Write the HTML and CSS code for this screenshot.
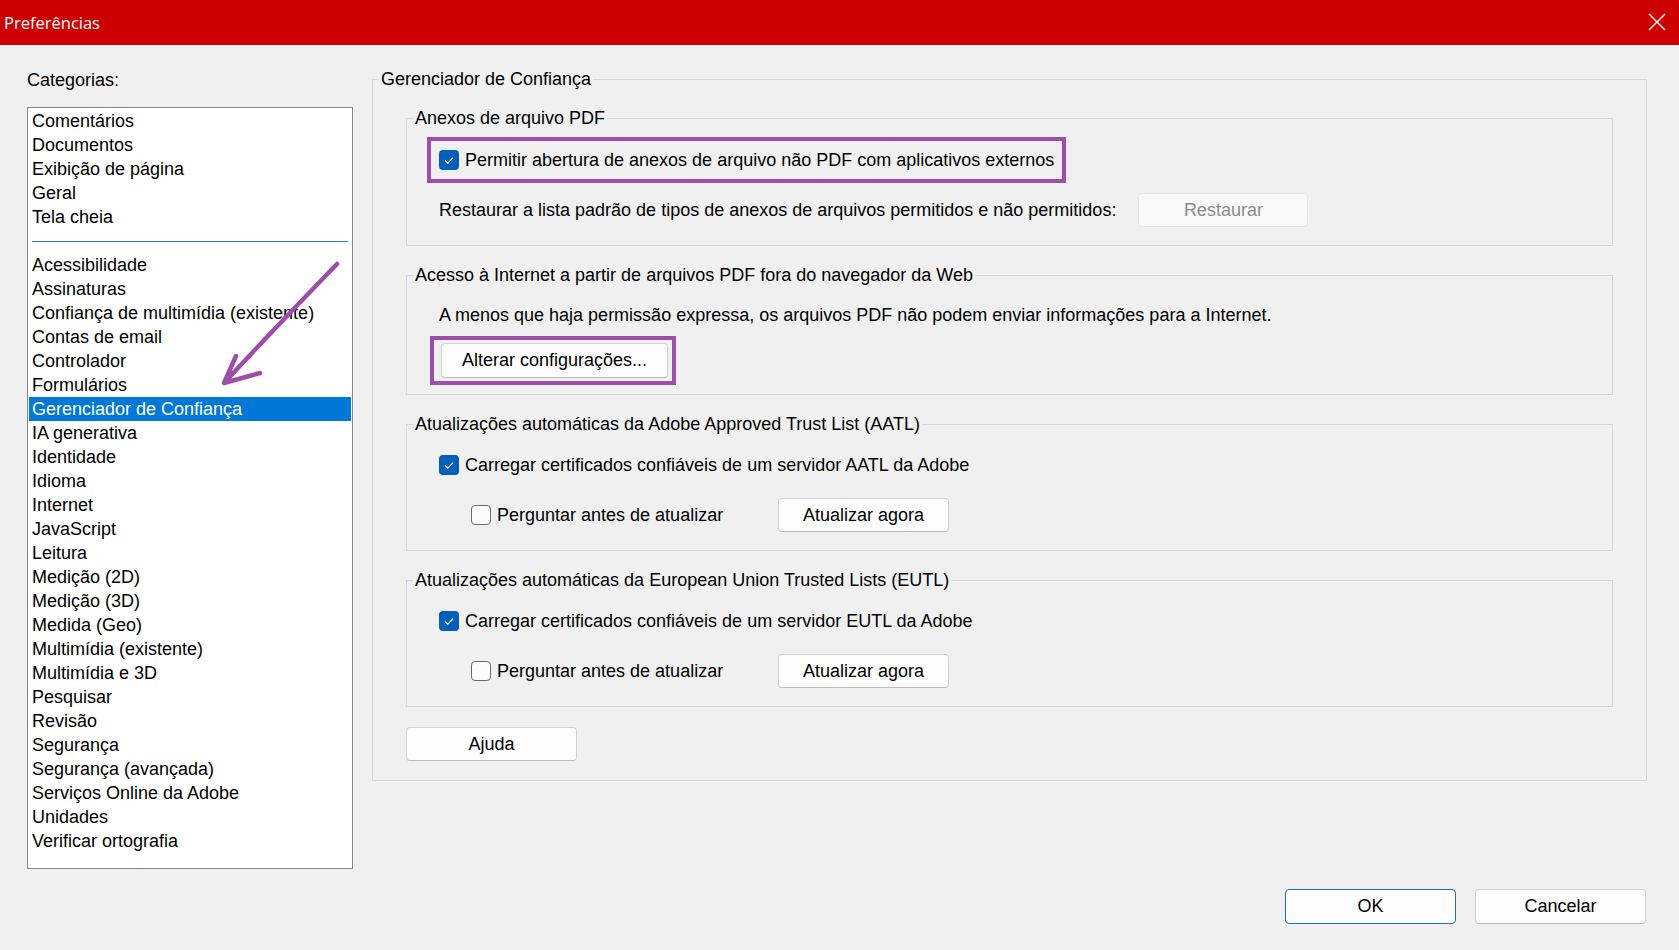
FILE: index.html
```html
<!DOCTYPE html>
<html lang="pt">
<head>
	<meta charset="UTF-8">
	<title>Preferências</title>
	<link rel="stylesheet" href="styles.css">
</head>
<body>
	<!-- Title bar -->
	<div class="titlebar">
		<span class="title">Preferências</span>
		<svg class="close" width="18" height="18" viewBox="0 0 18 18">
			<path d="M1 1 L17 17 M17 1 L1 17" stroke="#fff" stroke-width="1.4" fill="none"/>
		</svg>
	</div>

	<div class="main">
		<!-- Categories -->
		<div class="side">
			<div class="side-label">Categorias:</div>
			<ul class="categories">
				<li>Comentários</li>
				<li>Documentos</li>
				<li>Exibição de página</li>
				<li>Geral</li>
				<li>Tela cheia</li>
				<li class="sep"></li>
				<li>Acessibilidade</li>
				<li>Assinaturas</li>
				<li>Confiança de multimídia (existente)</li>
				<li>Contas de email</li>
				<li>Controlador</li>
				<li>Formulários</li>
				<li class="selected">Gerenciador de Confiança</li>
				<li>IA generativa</li>
				<li>Identidade</li>
				<li>Idioma</li>
				<li>Internet</li>
				<li>JavaScript</li>
				<li>Leitura</li>
				<li>Medição (2D)</li>
				<li>Medição (3D)</li>
				<li>Medida (Geo)</li>
				<li>Multimídia (existente)</li>
				<li>Multimídia e 3D</li>
				<li>Pesquisar</li>
				<li>Revisão</li>
				<li>Segurança</li>
				<li>Segurança (avançada)</li>
				<li>Serviços Online da Adobe</li>
				<li>Unidades</li>
				<li>Verificar ortografia</li>
			</ul>
		</div>

		<!-- Trust manager -->
		<fieldset class="trust">
			<legend>Gerenciador de Confiança</legend>

			<fieldset class="group g-attach">
				<legend>Anexos de arquivo PDF</legend>
				<div class="mark mark-check">
					<span class="check on"><svg width="20" height="20" viewBox="0 0 20 20"><path d="M6 10.4 L8.8 13.1 L14 7.6" stroke="#fff" stroke-width="1.3" fill="none"/></svg></span>
					<span>Permitir abertura de anexos de arquivo não PDF com aplicativos externos</span>
				</div>
				<div class="row restore">
					<span>Restaurar a lista padrão de tipos de anexos de arquivos permitidos e não permitidos:</span>
					<button class="btn disabled">Restaurar</button>
				</div>
			</fieldset>

			<fieldset class="group g-net">
				<legend>Acesso à Internet a partir de arquivos PDF fora do navegador da Web</legend>
				<div class="line">A menos que haja permissão expressa, os arquivos PDF não podem enviar informações para a Internet.</div>
				<div class="mark mark-btn">
					<button class="btn wide">Alterar configurações...</button>
				</div>
			</fieldset>

			<fieldset class="group g-update">
				<legend>Atualizações automáticas da Adobe Approved Trust List (AATL)</legend>
				<div class="line opt">
					<span class="check on"><svg width="20" height="20" viewBox="0 0 20 20"><path d="M6 10.4 L8.8 13.1 L14 7.6" stroke="#fff" stroke-width="1.3" fill="none"/></svg></span>
					<span>Carregar certificados confiáveis de um servidor AATL da Adobe</span>
				</div>
				<div class="row ask">
					<span class="ask-label"><span class="check"></span><span>Perguntar antes de atualizar</span></span>
					<button class="btn">Atualizar agora</button>
				</div>
			</fieldset>

			<fieldset class="group g-update g-last">
				<legend>Atualizações automáticas da European Union Trusted Lists (EUTL)</legend>
				<div class="line opt">
					<span class="check on"><svg width="20" height="20" viewBox="0 0 20 20"><path d="M6 10.4 L8.8 13.1 L14 7.6" stroke="#fff" stroke-width="1.3" fill="none"/></svg></span>
					<span>Carregar certificados confiáveis de um servidor EUTL da Adobe</span>
				</div>
				<div class="row ask">
					<span class="ask-label"><span class="check"></span><span>Perguntar antes de atualizar</span></span>
					<button class="btn">Atualizar agora</button>
				</div>
			</fieldset>

			<button class="btn">Ajuda</button>
		</fieldset>
	</div>

	<!-- Dialog buttons -->
	<div class="footer">
		<button class="btn tall default">OK</button>
		<button class="btn tall">Cancelar</button>
	</div>

	<!-- annotation arrow -->
	<svg class="arrow" width="1679" height="950" viewBox="0 0 1679 950">
		<path d="M337 264 C 300 302, 262 342, 224 383 M224 383 L236 356 M224 383 L260 373" stroke="#9b4fa8" stroke-width="4.5" stroke-linecap="round" fill="none"/>
	</svg>
</body>
</html>
```

FILE: styles.css
```css
body {
	margin: 0;
	width: 1679px;
	height: 950px;
	overflow: hidden;
	position: relative;
	background: #f0f0f0;
	font-family: "Liberation Sans", Arial, sans-serif;
	font-size: 18px;
	color: #000;
}

.titlebar {
	height: 45px;
	background: #cc0000;
	color: #fff;
	display: flex;
	align-items: center;
	justify-content: space-between;
	padding: 0 13px 0 4px;
}
.title {
	font-family: "Open Sans", sans-serif;
	font-size: 16.5px;
}
.close {
	display: block;
	margin-top: -2px;
}

.main {
	display: flex;
	align-items: flex-start;
	padding-left: 27px;
}

/* Categories */
.side {
	width: 326px;
	margin-top: 23px;
}
.side-label {
	line-height: 24px;
	margin-bottom: 15px;
}
.categories {
	list-style: none;
	margin: 0;
	padding: 1px 0 0;
	height: 759px;
	background: #fff;
	border: 1px solid #868686;
}
.categories li {
	line-height: 24px;
	height: 24px;
	padding-left: 3px;
	margin: 0 1px;
	white-space: nowrap;
}
.categories li.sep {
	height: 0;
	padding: 0;
	margin: 12px 4px 11px;
	border-top: 1px solid #2a83bf;
}
.categories li.selected {
	background: #0078d7;
	color: #fff;
}

/* Group boxes */
fieldset {
	margin: 0;
	min-width: 0;
	border: 1px solid #d7d7d7;
	box-sizing: border-box;
}
legend {
	padding: 0 2px;
	line-height: 24px;
}
.trust {
	width: 1275px;
	margin: 22px 0 0 19px;
	padding: 15px 33px 19px;
}
.trust > legend {
	margin-left: -27px;
}
.group {
	width: 1207px;
	padding: 0 20px 17px;
	margin-bottom: 17px;
}
.group > legend {
	margin-left: -14px;
}
.g-attach { padding-top: 7px; padding-bottom: 18px; }
.g-net { padding-top: 16px; padding-bottom: 9px; }
.g-update { padding-top: 17px; padding-bottom: 18px; }
.g-last { margin-top: 1px; margin-bottom: 20px; }

.mark {
	display: inline-flex;
	align-items: center;
	border: 4px solid #9b4fa8;
}
.mark-check {
	height: 38px;
	padding: 0 8px;
	gap: 6px;
}
.mark-btn {
	margin: 9px 0 0 3px;
	padding: 3px 4px 3px 7px;
}

.row {
	display: flex;
	align-items: center;
	padding-left: 12px;
}
.restore {
	margin-top: 10px;
	gap: 22px;
}
.line {
	line-height: 24px;
	padding-left: 12px;
}
.opt {
	display: flex;
	align-items: center;
	gap: 6px;
}
.ask {
	margin-top: 21px;
	padding-left: 44px;
}
.ask-label {
	display: flex;
	align-items: center;
	gap: 6px;
	width: 307px;
}

/* Check boxes */
.check {
	display: block;
	flex: none;
	width: 20px;
	height: 20px;
	box-sizing: border-box;
	border: 1px solid #6b6b6b;
	border-radius: 4px;
	background: #fbfbfb;
}
.check.on {
	border: none;
	background: #005fb8;
}
.check svg {
	display: block;
}

/* Buttons */
.btn {
	width: 171px;
	height: 34px;
	padding: 0;
	font: inherit;
	color: #000;
	background: #fdfdfd;
	border: 1px solid #d3d3d3;
	border-bottom-color: #bcbcbc;
	border-radius: 4px;
}
.btn.wide,
.btn.tall {
	height: 35px;
}
.btn.wide {
	width: 227px;
}
.btn.disabled {
	width: 170px;
	color: #8c8c8c;
	background: #f9f9f9;
	border-color: #e6e6e6;
}
.btn.default {
	border: 1px solid #1d6fae;
}

.footer {
	display: flex;
	justify-content: flex-end;
	gap: 19px;
	margin-top: 20px;
	padding-right: 33px;
}

.arrow {
	position: absolute;
	left: 0;
	top: 0;
	pointer-events: none;
}
```
